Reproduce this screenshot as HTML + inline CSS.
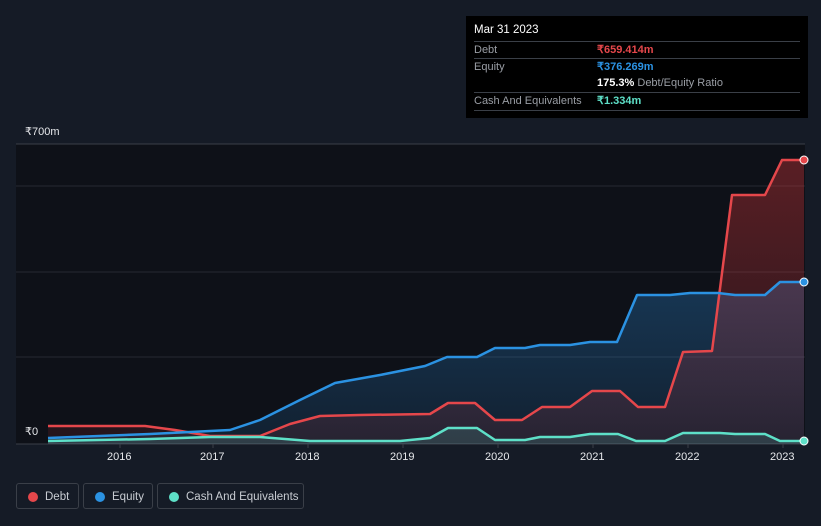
<!DOCTYPE html>
<html><head><style>
body{margin:0;width:821px;height:526px;background:#151b26;font-family:"Liberation Sans",sans-serif;overflow:hidden;position:relative}
.tt{position:absolute;left:466px;top:16px;width:342px;height:102px;background:#000;color:#fff;font-size:11px}
.tt .r{position:absolute;left:8px;right:8px;height:17px;line-height:17px;border-top:1px solid #3a3f47}
.g{color:#9a9ea5}
.lg{position:absolute;top:483px;height:26px;border:1px solid #3a3f48;border-radius:3px;color:#c8ccd2;font-size:11.5px;line-height:26px;box-sizing:border-box}
.lg i{position:absolute;left:11px;top:8px;width:10px;height:10px;border-radius:50%}
.lg span{position:absolute;left:28px}
.ax{position:absolute;color:#e6e8eb;font-size:11px}
</style></head><body>
<svg width="821" height="526" style="position:absolute;left:0;top:0">
<defs>
<linearGradient id="dg" x1="0" y1="0" x2="0" y2="1"><stop offset="0" stop-color="#e5383b" stop-opacity=".35"/><stop offset="1" stop-color="#e5383b" stop-opacity=".1"/></linearGradient>
<linearGradient id="eg" x1="0" y1="0" x2="0" y2="1"><stop offset="0" stop-color="#2d8fe0" stop-opacity=".3"/><stop offset="1" stop-color="#2d8fe0" stop-opacity=".12"/></linearGradient>
</defs>
<rect x="16" y="144" width="789" height="300" fill="#0e1118"/>
<line x1="16" y1="144" x2="805" y2="144" stroke="#3a3f48"/>
<line x1="16" y1="186" x2="805" y2="186" stroke="#252932"/>
<line x1="16" y1="272" x2="805" y2="272" stroke="#252932"/>
<line x1="16" y1="357" x2="805" y2="357" stroke="#252932"/>
<line x1="16" y1="444" x2="805" y2="444" stroke="#3a3f48"/>
<g stroke="#3a3f48"><line x1="120" y1="444" x2="120" y2="448"/><line x1="213" y1="444" x2="213" y2="448"/><line x1="308" y1="444" x2="308" y2="448"/><line x1="403" y1="444" x2="403" y2="448"/><line x1="498" y1="444" x2="498" y2="448"/><line x1="593" y1="444" x2="593" y2="448"/><line x1="688" y1="444" x2="688" y2="448"/><line x1="783" y1="444" x2="783" y2="448"/></g>
<polygon fill="url(#eg)" points="48,438 150,434 230,430 260,420 300,400 335,383 380,375 425,366 447,357 477,357 495,348 525,348 540,345 570,345 590,342 617,342 637,295 670,295 690,293 718,293 735,295 765,295 780,282 804,282 804,444 48,444"/>
<polygon fill="url(#dg)" points="48,426 145,426 175,430 210,436 260,436 290,424 320,416 360,415 430,414 448,403 475,403 495,420 522,420 542,407 570,407 592,391 620,391 638,407 665,407 683,352 712,351 732,195 765,195 782,160 804,160 804,444 48,444"/>
<polygon fill="#5ee0c8" fill-opacity=".15" points="48,441 150,439 210,437 260,437 310,441 400,441 430,438 448,428 477,428 495,440 525,440 540,437 570,437 590,434 618,434 636,441 665,441 683,433 720,433 735,434 765,434 780,441 804,441 804,444 48,444"/>
<g fill="none" stroke-width="2.5" stroke-linejoin="round">
<polyline stroke="#e5474b" points="48,426 145,426 175,430 210,436 260,436 290,424 320,416 360,415 430,414 448,403 475,403 495,420 522,420 542,407 570,407 592,391 620,391 638,407 665,407 683,352 712,351 732,195 765,195 782,160 804,160"/>
<polyline stroke="#2b92e2" points="48,438 150,434 230,430 260,420 300,400 335,383 380,375 425,366 447,357 477,357 495,348 525,348 540,345 570,345 590,342 617,342 637,295 670,295 690,293 718,293 735,295 765,295 780,282 804,282"/>
<polyline stroke="#5ee0c8" points="48,441 150,439 210,437 260,437 310,441 400,441 430,438 448,428 477,428 495,440 525,440 540,437 570,437 590,434 618,434 636,441 665,441 683,433 720,433 735,434 765,434 780,441 804,441"/>
</g>
<circle cx="804" cy="160" r="4" fill="#e5474b" stroke="#fff" stroke-width="1"/>
<circle cx="804" cy="282" r="4" fill="#2b92e2" stroke="#fff" stroke-width="1"/>
<circle cx="804" cy="441" r="4" fill="#5ee0c8" stroke="#fff" stroke-width="1"/>
</svg>
<div class="ax" style="left:25px;top:125px">₹700m</div>
<div class="ax" style="left:25px;top:425px">₹0</div>
<div class="ax" style="left:107px;top:451px">2016</div>
<div class="ax" style="left:200px;top:451px">2017</div>
<div class="ax" style="left:295px;top:451px">2018</div>
<div class="ax" style="left:390px;top:451px">2019</div>
<div class="ax" style="left:485px;top:451px">2020</div>
<div class="ax" style="left:580px;top:451px">2021</div>
<div class="ax" style="left:675px;top:451px">2022</div>
<div class="ax" style="left:770px;top:451px">2023</div>
<div class="tt">
<div style="position:absolute;left:8px;top:8px;font-size:11.5px">Mar 31 2023</div>
<div class="r" style="top:25px"><span class="g">Debt</span><span style="position:absolute;left:123px;color:#e5474b;font-weight:bold">₹659.414m</span></div>
<div class="r" style="top:42px;border-top-color:#3a3f47"><span class="g">Equity</span><span style="position:absolute;left:123px;color:#2b92e2;font-weight:bold">₹376.269m</span></div>
<div class="r" style="top:59px;border-top:none"><span style="position:absolute;left:123px"><b>175.3%</b> <span class="g">Debt/Equity Ratio</span></span></div>
<div class="r" style="top:76px"><span class="g">Cash And Equivalents</span><span style="position:absolute;left:123px;color:#5ee0c8;font-weight:bold">₹1.334m</span></div>
<div class="r" style="top:94px;height:0"></div>
</div>
<div class="lg" style="left:16px;width:63px"><i style="background:#e5474b"></i><span>Debt</span></div>
<div class="lg" style="left:83px;width:70px"><i style="background:#2b92e2"></i><span>Equity</span></div>
<div class="lg" style="left:157px;width:147px"><i style="background:#5ee0c8"></i><span>Cash And Equivalents</span></div>
</body></html>
